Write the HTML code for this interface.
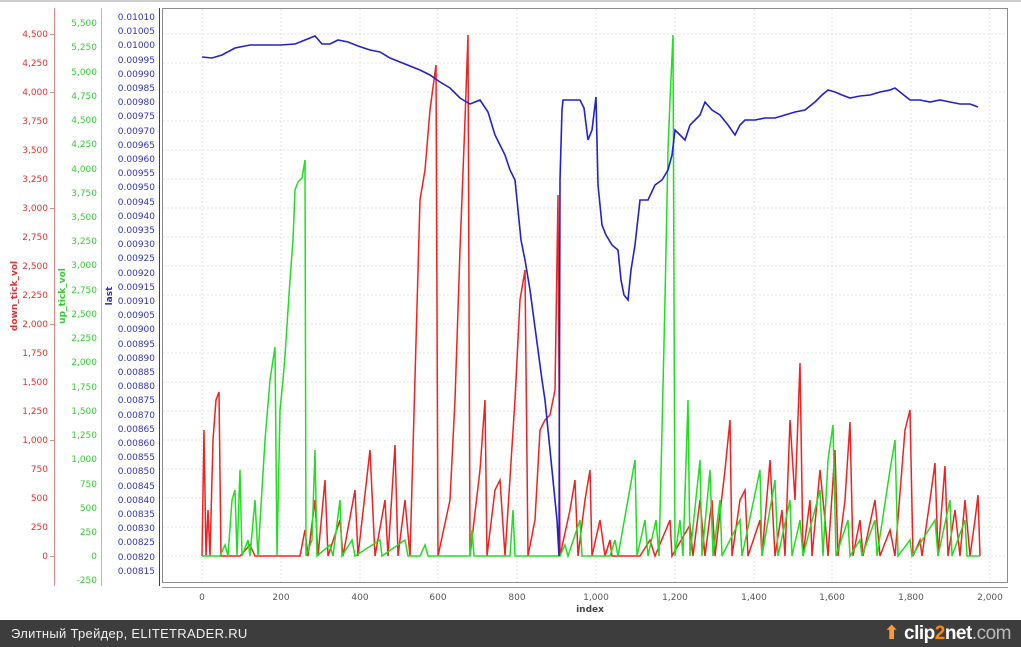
<!DOCTYPE html>
<html><head><meta charset="utf-8"><style>
html,body{margin:0;padding:0;width:1021px;height:647px;overflow:hidden;background:#fff;font-family:"Liberation Sans","DejaVu Sans",sans-serif}
#bar{position:absolute;left:0;top:620px;width:1021px;height:27px;background:#3d3d3d;color:#f0f0f0;font-size:13px;line-height:27px}
#bar .l{position:absolute;left:11px;letter-spacing:0.3px}
#bar .r{position:absolute;right:10px;top:0;font-size:19px;font-weight:bold;color:#fff;letter-spacing:-0.5px}
svg text{font-family:"DejaVu Sans","Liberation Sans",sans-serif;font-size:9px}
</style></head><body>
<svg width="1021" height="620" style="position:absolute;left:0;top:0">
<rect x="0" y="0" width="1021" height="2" fill="#cfcfcf"/>
<g stroke="#e4e4e4" stroke-width="1" stroke-dasharray="2,2">
<line x1="163" x2="1007" y1="556" y2="556"/><line x1="163" x2="1007" y1="527" y2="527"/><line x1="163" x2="1007" y1="498" y2="498"/><line x1="163" x2="1007" y1="469" y2="469"/><line x1="163" x2="1007" y1="440" y2="440"/><line x1="163" x2="1007" y1="411" y2="411"/><line x1="163" x2="1007" y1="382" y2="382"/><line x1="163" x2="1007" y1="353" y2="353"/><line x1="163" x2="1007" y1="324" y2="324"/><line x1="163" x2="1007" y1="295" y2="295"/><line x1="163" x2="1007" y1="266" y2="266"/><line x1="163" x2="1007" y1="237" y2="237"/><line x1="163" x2="1007" y1="208" y2="208"/><line x1="163" x2="1007" y1="179" y2="179"/><line x1="163" x2="1007" y1="150" y2="150"/><line x1="163" x2="1007" y1="121" y2="121"/><line x1="163" x2="1007" y1="92" y2="92"/><line x1="163" x2="1007" y1="63" y2="63"/><line x1="163" x2="1007" y1="34" y2="34"/>
<line y1="9" y2="582" x1="202" x2="202"/><line y1="9" y2="582" x1="281" x2="281"/><line y1="9" y2="582" x1="360" x2="360"/><line y1="9" y2="582" x1="438" x2="438"/><line y1="9" y2="582" x1="517" x2="517"/><line y1="9" y2="582" x1="596" x2="596"/><line y1="9" y2="582" x1="675" x2="675"/><line y1="9" y2="582" x1="754" x2="754"/><line y1="9" y2="582" x1="832" x2="832"/><line y1="9" y2="582" x1="911" x2="911"/><line y1="9" y2="582" x1="990" x2="990"/>
</g>
<rect x="162.5" y="8.5" width="845" height="574" fill="none" stroke="#8c8c8c"/>
<line x1="162" x2="1008" y1="587.5" y2="587.5" stroke="#999"/>
<line x1="54.5" x2="54.5" y1="8" y2="586" stroke="#d88" stroke-width="1"/>
<line x1="101.5" x2="101.5" y1="8" y2="586" stroke="#6e6" stroke-width="1"/>
<line x1="159.5" x2="159.5" y1="8" y2="586" stroke="#33a" stroke-width="1"/>
<g fill="#d33" text-anchor="end">
<text x="48" y="559">0</text><text x="48" y="530">250</text><text x="48" y="501">500</text><text x="48" y="472">750</text><text x="48" y="443">1,000</text><text x="48" y="414">1,250</text><text x="48" y="385">1,500</text><text x="48" y="356">1,750</text><text x="48" y="327">2,000</text><text x="48" y="298">2,250</text><text x="48" y="269">2,500</text><text x="48" y="240">2,750</text><text x="48" y="211">3,000</text><text x="48" y="182">3,250</text><text x="48" y="153">3,500</text><text x="48" y="124">3,750</text><text x="48" y="95">4,000</text><text x="48" y="66">4,250</text><text x="48" y="37">4,500</text>
</g>
<g stroke="#d88"><line x1="50" x2="54" y1="556.5" y2="556.5"/><line x1="50" x2="54" y1="440.5" y2="440.5"/><line x1="50" x2="54" y1="324.5" y2="324.5"/><line x1="50" x2="54" y1="208.5" y2="208.5"/><line x1="50" x2="54" y1="92.5" y2="92.5"/><line x1="50" x2="54" y1="34.5" y2="34.5"/></g>
<g fill="#3c3" text-anchor="end">
<text x="97" y="583">-250</text><text x="97" y="559">0</text><text x="97" y="535">250</text><text x="97" y="511">500</text><text x="97" y="487">750</text><text x="97" y="462">1,000</text><text x="97" y="438">1,250</text><text x="97" y="414">1,500</text><text x="97" y="390">1,750</text><text x="97" y="365">2,000</text><text x="97" y="341">2,250</text><text x="97" y="317">2,500</text><text x="97" y="293">2,750</text><text x="97" y="268">3,000</text><text x="97" y="244">3,250</text><text x="97" y="220">3,500</text><text x="97" y="196">3,750</text><text x="97" y="172">4,000</text><text x="97" y="147">4,250</text><text x="97" y="123">4,500</text><text x="97" y="99">4,750</text><text x="97" y="75">5,000</text><text x="97" y="50">5,250</text><text x="97" y="26">5,500</text>
</g>
<g fill="#33b" text-anchor="end">
<text x="155" y="574">0.00815</text><text x="155" y="560">0.00820</text><text x="155" y="545">0.00825</text><text x="155" y="531">0.00830</text><text x="155" y="517">0.00835</text><text x="155" y="503">0.00840</text><text x="155" y="489">0.00845</text><text x="155" y="474">0.00850</text><text x="155" y="460">0.00855</text><text x="155" y="446">0.00860</text><text x="155" y="432">0.00865</text><text x="155" y="418">0.00870</text><text x="155" y="403">0.00875</text><text x="155" y="389">0.00880</text><text x="155" y="375">0.00885</text><text x="155" y="361">0.00890</text><text x="155" y="347">0.00895</text><text x="155" y="332">0.00900</text><text x="155" y="318">0.00905</text><text x="155" y="304">0.00910</text><text x="155" y="290">0.00915</text><text x="155" y="276">0.00920</text><text x="155" y="261">0.00925</text><text x="155" y="247">0.00930</text><text x="155" y="233">0.00935</text><text x="155" y="219">0.00940</text><text x="155" y="205">0.00945</text><text x="155" y="190">0.00950</text><text x="155" y="176">0.00955</text><text x="155" y="162">0.00960</text><text x="155" y="148">0.00965</text><text x="155" y="134">0.00970</text><text x="155" y="119">0.00975</text><text x="155" y="105">0.00980</text><text x="155" y="91">0.00985</text><text x="155" y="77">0.00990</text><text x="155" y="63">0.00995</text><text x="155" y="48">0.01000</text><text x="155" y="34">0.01005</text><text x="155" y="20">0.01010</text>
</g>
<g font-weight="bold" style="font-size:8.5px">
<text transform="translate(17,296) rotate(-90)" fill="#d33" text-anchor="middle">down_tick_vol</text>
<text transform="translate(65,296) rotate(-90)" fill="#3c3" text-anchor="middle">up_tick_vol</text>
<text transform="translate(112,296) rotate(-90)" fill="#33b" text-anchor="middle">last</text>
<text x="590" y="612" fill="#444" text-anchor="middle">index</text>
</g>
<g fill="#555" text-anchor="middle">
<text x="202" y="600">0</text><text x="281" y="600">200</text><text x="360" y="600">400</text><text x="438" y="600">600</text><text x="517" y="600">800</text><text x="596" y="600">1,000</text><text x="675" y="600">1,200</text><text x="754" y="600">1,400</text><text x="832" y="600">1,600</text><text x="911" y="600">1,800</text><text x="990" y="600">2,000</text>
</g>
<polyline fill="none" stroke="#e22" stroke-width="1.5" points="202,556 204,430 206,556 208,510 210,556 213,440 216,400 219,392 221,556 240,556 250,545 255,556 300,556 305,530 308,556 315,500 318,556 325,480 328,556 340,520 343,556 355,490 358,556 370,450 375,556 385,500 388,556 395,445 398,556 405,500 410,556 420,200 425,170 430,110 436,65 438,556 450,500 455,400 460,250 465,120 468,35 470,556 480,470 485,400 487,556 495,490 500,480 505,556 515,400 520,300 525,270 528,556 535,520 540,430 545,420 550,415 555,390 558,195 560,556 570,510 575,480 578,556 585,500 590,470 592,556 600,520 605,556 610,540 612,556 640,556 650,540 655,556 670,520 672,556 690,525 693,556 700,500 705,556 712,500 715,556 725,470 730,420 732,556 740,500 745,490 748,556 760,520 762,556 770,460 775,556 782,510 785,556 790,420 795,500 800,363 803,556 810,500 812,556 820,470 825,520 828,556 835,450 838,556 845,500 850,422 853,556 860,520 863,556 875,500 880,556 890,530 895,556 905,430 910,410 913,556 920,540 922,556 930,500 935,463 938,556 945,466 948,556 955,510 960,556 965,500 970,556 975,520 978,495 980,556"/>
<polyline fill="none" stroke="#2d2" stroke-width="1.5" points="202,556 220,556 225,545 228,556 232,500 235,490 237,556 240,470 242,556 248,540 250,556 255,500 258,556 265,440 270,380 275,347 277,556 280,410 283,380 285,356 288,310 290,280 293,240 295,190 298,182 302,178 305,160 306,556 312,540 315,450 317,556 330,545 333,556 340,500 342,556 352,540 355,556 380,540 382,556 405,540 408,556 420,556 425,545 428,556 470,556 472,530 474,556 510,556 513,510 515,556 560,556 565,545 568,556 580,520 582,556 610,556 615,540 618,556 635,460 637,556 645,520 648,556 656,520 659,556 662,430 665,300 668,150 670,100 673,35 675,556 680,520 683,556 688,400 690,556 700,460 702,556 710,470 713,556 720,500 722,556 740,520 742,556 760,470 762,556 775,480 778,556 790,500 792,556 800,520 803,556 820,490 823,556 828,460 833,425 836,556 848,520 850,556 860,540 862,556 875,520 877,556 890,470 895,440 898,556 910,540 912,556 935,520 938,556 950,500 952,556 965,520 967,556 980,556"/>
<polyline fill="none" stroke="#22c" stroke-width="1.6" points="202,57 212,58 222,55 235,48 250,45 265,45 280,45 295,44 305,40 315,36 322,44 330,44 338,40 348,42 358,46 370,50 380,52 390,58 400,62 410,66 420,70 430,75 440,82 450,88 460,98 470,104 480,100 488,112 495,135 500,145 505,155 510,170 515,180 518,210 521,240 525,260 530,290 534,320 538,350 542,380 545,400 548,430 551,460 554,490 557,520 559,556 560,180 562,110 563,100 570,100 575,100 580,100 584,108 588,140 592,130 596,97 598,185 602,225 606,235 612,245 618,250 621,280 624,295 628,300 631,270 635,245 640,200 648,200 655,185 662,180 668,170 672,155 675,130 680,135 685,140 690,125 700,115 705,102 712,110 720,115 728,125 735,135 740,125 745,120 755,120 765,118 775,118 785,115 795,112 805,110 815,102 822,95 828,90 835,92 842,95 850,98 860,96 870,95 880,92 890,90 895,88 900,92 910,100 920,100 930,102 940,100 950,102 960,104 970,104 978,107"/>
</svg>
<div id="bar"><span class="l">Элитный Трейдер, ELITETRADER.RU</span><span class="r"><span style="color:#f93">⬆</span> clip<span style="color:#f80">2</span>net<span style="color:#bbb;font-weight:normal">.com</span></span></div>
</body></html>
